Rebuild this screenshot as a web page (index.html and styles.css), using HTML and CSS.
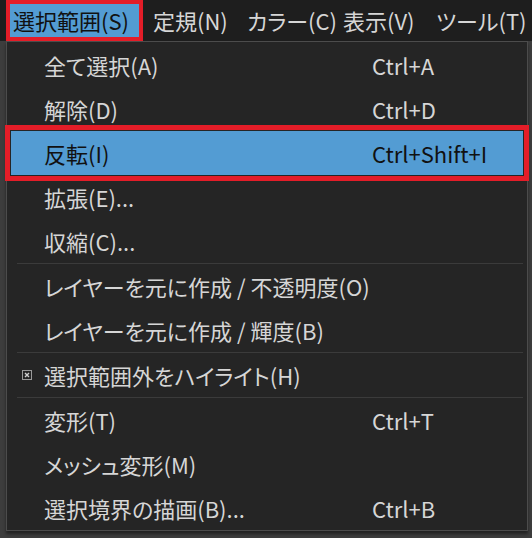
FILE: index.html
```html
<!DOCTYPE html>
<html lang="ja">
<head>
    <meta charset="UTF-8">
    <title>選択範囲メニュー</title>
    <link rel="stylesheet" href="styles.css">
</head>
<body>
    <div class="menu-bar">
        <span class="bar-item open">選択範囲(S)</span>
        <span class="bar-item w94">定規(N)</span>
        <span class="bar-item w96">カラー(C)</span>
        <span class="bar-item w93">表示(V)</span>
        <span class="bar-item">ツール(T)</span>
    </div>

    <div class="stage">
        <ul class="dropdown">
            <li class="item"><span class="icon"></span><span class="label">全て選択(A)</span><span class="key">Ctrl+A</span></li>
            <li class="item"><span class="icon"></span><span class="label">解除(D)</span><span class="key">Ctrl+D</span></li>
            <li class="item hover"><span class="icon"></span><span class="label">反転(I)</span><span class="key">Ctrl+Shift+I</span></li>
            <li class="item"><span class="icon"></span><span class="label">拡張(E)...</span><span class="key"></span></li>
            <li class="item"><span class="icon"></span><span class="label">収縮(C)...</span><span class="key"></span></li>
            <li class="sep"></li>
            <li class="item"><span class="icon"></span><span class="label">レイヤーを元に作成 / 不透明度(O)</span><span class="key"></span></li>
            <li class="item"><span class="icon"></span><span class="label">レイヤーを元に作成 / 輝度(B)</span><span class="key"></span></li>
            <li class="sep"></li>
            <li class="item">
                <span class="icon">
                    <svg width="10" height="10" viewBox="0 0 10 10">
                        <rect x="0.5" y="0.5" width="9" height="9" fill="none" stroke="#9a9a9a"/>
                        <path d="M3 3 L7 7 M7 3 L3 7" stroke="#d0d0d0" stroke-width="1.4"/>
                    </svg>
                </span>
                <span class="label">選択範囲外をハイライト(H)</span><span class="key"></span>
            </li>
            <li class="sep"></li>
            <li class="item"><span class="icon"></span><span class="label">変形(T)</span><span class="key">Ctrl+T</span></li>
            <li class="item"><span class="icon"></span><span class="label">メッシュ変形(M)</span><span class="key"></span></li>
            <li class="item"><span class="icon"></span><span class="label">選択境界の描画(B)...</span><span class="key">Ctrl+B</span></li>
        </ul>
    </div>
</body>
</html>
```

FILE: styles.css
```css
* { margin: 0; padding: 0; box-sizing: border-box; }

body {
    width: 532px;
    height: 538px;
    overflow: hidden;
    background: #3d3d3d;
    font-family: "Noto Sans CJK JP", "Noto Sans", sans-serif;
    font-feature-settings: "palt";
    color: #d6d6d6;
}

.menu-bar {
    display: flex;
    align-items: center;
    height: 41px;
    background: #1e1e1e;
    padding-left: 10px;
    font-size: 22px;
}
.bar-item {
    height: 33px;
    line-height: 33px;
    white-space: nowrap;
}
.bar-item.open {
    width: 129px;
    padding-left: 3px;
    margin-right: 14px;
    background: #539cd3;
    color: #111;
    outline: 4px solid #e41d28;
}
.w94 { width: 94px; }
.w96 { width: 96px; }
.w93 { width: 93px; }

.stage {
    padding: 0 4px 0 6px;
}

.dropdown {
    list-style: none;
    background: #252525;
    border: 1px solid #4c4c4c;
    padding: 1px 0 0;
    box-shadow: 0 3px 3px rgba(0, 0, 0, 0.45);
}

.item {
    display: grid;
    grid-template-columns: 37px 328px auto;
    align-items: center;
    height: 44px;
    font-size: 22px;
    white-space: nowrap;
}
.item .icon { display: flex; justify-content: center; padding-left: 2px; }
.item.hover {
    margin: 0 4px 0 4px;
    grid-template-columns: 33px 328px auto;
    background: #539cd3;
    color: #111;
    outline: 5px solid #e41d28;
    outline-offset: 1px;
}

.sep {
    height: 1px;
    margin: 0 4px 0 10px;
    background: #3b3b3b;
}
```
